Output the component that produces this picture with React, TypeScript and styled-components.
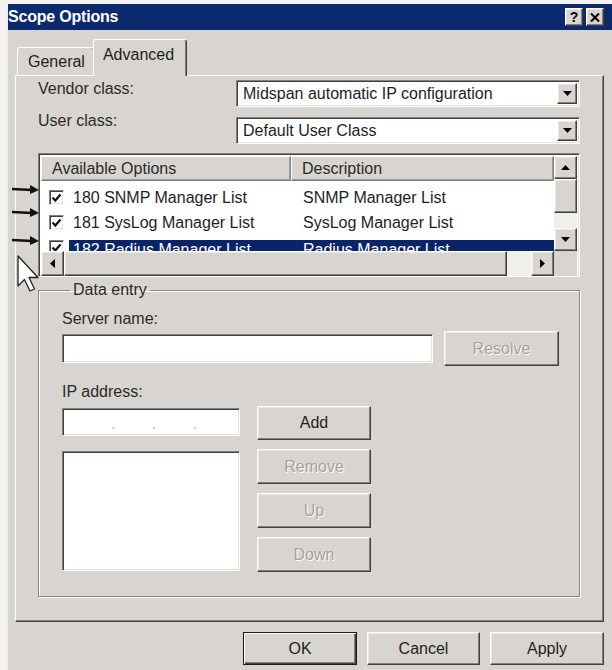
import React from 'react';
import styled, { createGlobalStyle, css } from 'styled-components';

const GlobalStyle = createGlobalStyle`
  html, body {
    margin: 0;
    padding: 0;
    background: #f3f3f1;
  }
  body {
    font-family: "Liberation Sans", Arial, sans-serif;
    font-size: 16px;
    color: #1e1e1e;
  }
`;

// classic 3D edges
const raised = css`
  background: #d8d5d0;
  border: 1px solid;
  border-color: #ffffff #404040 #404040 #ffffff;
  box-shadow: inset -1px -1px 0 #808080, inset 1px 1px 0 #e9e7e3;
`;

const sunken = css`
  background: #ffffff;
  border: 1px solid;
  border-color: #808080 #ffffff #ffffff #808080;
  box-shadow: inset 1px 1px 0 #404040, inset -1px -1px 0 #e4e2de;
`;

const Page = styled.div`
  position: relative;
  width: 612px;
  height: 670px;
  overflow: hidden;
  padding: 4px 0 0 7px;
  box-sizing: border-box;
`;

const Window = styled.div`
  width: 610px;
  height: 680px;
  background: #d8d5d0;
  border-left: 1px solid #ecebe8;
  box-sizing: border-box;
  display: flex;
  flex-direction: column;
`;

const TitleBar = styled.div`
  height: 26px;
  background: #0b2a6e;
  display: flex;
  align-items: center;
  padding: 0 13px 0 0;
  gap: 3px;
`;

const Title = styled.div`
  flex: 1;
  color: #ffffff;
  font-weight: bold;
  font-size: 16px;
  letter-spacing: -0.2px;
`;

const CaptionButton = styled.div`
  ${raised};
  width: 18px;
  height: 18px;
  box-sizing: border-box;
  display: flex;
  align-items: center;
  justify-content: center;
  font-weight: bold;
  font-size: 14px;
  color: #000;
`;

const Body = styled.div`
  padding: 10px 13px 0 7px;
  display: flex;
  flex-direction: column;
`;

const TabStrip = styled.div`
  height: 36px;
  display: flex;
  align-items: flex-end;
  padding-left: 2px;
  position: relative;
  z-index: 1;
  margin-bottom: -1px;
`;

const Tab = styled.div<{ $active?: boolean }>`
  box-sizing: border-box;
  display: flex;
  align-items: center;
  border: 1px solid;
  border-color: #ffffff #404040 transparent #ffffff;
  border-bottom: none;
  border-radius: 3px 3px 0 0;
  background: #d8d5d0;
  box-shadow: inset -1px 0 0 #808080;
  ${(p) =>
    p.$active
      ? css`
          height: 37px;
          padding: 0 12px 6px 9px;
          margin-left: -2px;
        `
      : css`
          height: 28px;
          padding: 0 9px 0 10px;
          margin-bottom: 1px;
        `}
`;

const Panel = styled.div`
  height: 547px;
  box-sizing: border-box;
  border: 1px solid;
  border-color: #ffffff #404040 #404040 #ffffff;
  box-shadow: inset -1px -1px 0 #808080;
  padding: 4px 23px 0 22px;
  display: flex;
  flex-direction: column;
`;

const FieldRow = styled.div<{ $gap?: number }>`
  display: flex;
  align-items: flex-start;
  justify-content: space-between;
  margin-top: ${(p) => p.$gap ?? 0}px;
`;

const Label = styled.span`
  color: #2a2a2a;
  line-height: 18px;
`;

const Combo = styled.div<{ $offset?: number }>`
  ${sunken};
  width: 344px;
  height: 27px;
  margin-top: ${(p) => p.$offset ?? 0}px;
  box-sizing: border-box;
  display: flex;
  align-items: center;
  padding: 0 2px 0 6px;
`;

const ComboText = styled.span`
  flex: 1;
  white-space: nowrap;
  overflow: hidden;
`;

const ArrowButton = styled.div<{ $w?: number; $h?: number }>`
  ${raised};
  width: ${(p) => p.$w ?? 20}px;
  height: ${(p) => p.$h ?? 21}px;
  box-sizing: border-box;
  display: flex;
  align-items: center;
  justify-content: center;
  flex: none;
`;

const List = styled.div`
  ${sunken};
  margin-top: 9px;
  height: 124px;
  box-sizing: border-box;
  padding: 2px;
  display: grid;
  grid-template-columns: 1fr 23px;
  grid-template-rows: 95px 25px;
`;

const ListBody = styled.div`
  overflow: hidden;
  background: #ffffff;
`;

const Header = styled.div`
  display: flex;
  height: 25px;
  margin-bottom: 4px;
`;

const HeaderCell = styled.div<{ $w?: number }>`
  ${raised};
  box-shadow: inset -1px -1px 0 #a09d98;
  border-color: #ffffff #808080 #808080 #ffffff;
  box-sizing: border-box;
  ${(p) => (p.$w ? `width: ${p.$w}px;` : 'flex: 1;')}
  display: flex;
  align-items: center;
  padding-left: 10px;
  color: #2a2a2a;
`;

const Row = styled.div`
  height: 25px;
  display: flex;
  align-items: center;
  padding-left: 8px;
`;

const Check = styled.div`
  ${sunken};
  width: 15px;
  height: 15px;
  box-sizing: border-box;
  display: flex;
  align-items: center;
  justify-content: center;
  flex: none;
`;

const RowLabel = styled.div<{ $selected?: boolean }>`
  flex: 1;
  display: flex;
  align-items: center;
  height: 21px;
  margin-left: 5px;
  padding-left: 4px;
  white-space: nowrap;
  ${(p) =>
    p.$selected &&
    css`
      background: #0a246a;
      color: #ffffff;
      margin-top: 5px;
    `}
`;

const Col = styled.span<{ $w?: number }>`
  ${(p) => (p.$w ? `width: ${p.$w}px;` : '')}
  flex: none;
`;

const VScroll = styled.div`
  display: flex;
  flex-direction: column;
  background: #f1efeb;
`;

const Thumb = styled.div<{ $size: number; $vertical?: boolean }>`
  ${raised};
  box-sizing: border-box;
  flex: none;
  ${(p) => (p.$vertical ? `height: ${p.$size}px;` : `width: ${p.$size}px;`)}
`;

const Track = styled.div`
  flex: 1;
`;

const HScroll = styled.div`
  display: flex;
  background: #f1efeb;
`;

const Corner = styled.div`
  background: #d8d5d0;
`;

const Group = styled.fieldset`
  margin: 4px 0 0;
  height: 316px;
  box-sizing: border-box;
  border: 1px solid #8a8782;
  box-shadow: 1px 1px 0 #ffffff, inset 1px 1px 0 #ffffff;
  padding: 11px 0 0 23px;
  min-width: 0;
`;

const Legend = styled.legend`
  margin-left: 8px;
  padding: 0 3px;
  line-height: 18px;
  color: #2a2a2a;
`;

const GroupLabel = styled.div<{ $gap?: number }>`
  margin-top: ${(p) => p.$gap ?? 0}px;
  line-height: 18px;
  color: #2a2a2a;
`;

const ServerRow = styled.div`
  display: flex;
  align-items: center;
  gap: 11px;
  margin-top: 3px;
`;

const TextBox = styled.div<{ $w: number; $h: number }>`
  ${sunken};
  width: ${(p) => p.$w}px;
  height: ${(p) => p.$h}px;
  box-sizing: border-box;
  flex: none;
`;

const IpBox = styled(TextBox)`
  display: flex;
  align-items: flex-end;
  justify-content: center;
  gap: 37px;
  padding: 0 0 4px 6px;
  color: #b4b2ae;
  font-size: 14px;
  line-height: 14px;
`;

const IpGrid = styled.div`
  display: flex;
  gap: 17px;
  margin-top: 5px;
`;

const IpColumn = styled.div`
  display: flex;
  flex-direction: column;
  gap: 15px;
  padding-top: 2px;
`;

const ButtonColumn = styled.div`
  display: flex;
  flex-direction: column;
  gap: 9px;
`;

const Button = styled.div<{ $w?: number; $h?: number; $disabled?: boolean; $default?: boolean }>`
  ${raised};
  width: ${(p) => p.$w ?? 114}px;
  height: ${(p) => p.$h ?? 35}px;
  box-sizing: border-box;
  display: flex;
  align-items: center;
  justify-content: center;
  flex: none;
  color: ${(p) => (p.$disabled ? '#a5a29d' : '#1e1e1e')};
  ${(p) => p.$disabled && 'text-shadow: 1px 1px 0 #ffffff;'}
  ${(p) =>
    p.$default &&
    css`
      border: 1px solid #1a1a1a;
      box-shadow: inset 1px 1px 0 #ffffff, inset -1px -1px 0 #404040, inset -2px -2px 0 #808080;
    `}
`;

const Footer = styled.div`
  display: flex;
  justify-content: flex-end;
  gap: 10px;
  padding: 10px 0 0;
`;

const Annotation = styled.svg`
  position: absolute;
  left: 10px;
  top: 180px;
`;

const DownTri = () => (
  <svg width="9" height="5" viewBox="0 0 9 5">
    <polygon points="0,0 9,0 4.5,5" fill="#000" />
  </svg>
);
const UpTri = () => (
  <svg width="9" height="5" viewBox="0 0 9 5">
    <polygon points="0,5 9,5 4.5,0" fill="#000" />
  </svg>
);
const LeftTri = () => (
  <svg width="5" height="9" viewBox="0 0 5 9">
    <polygon points="5,0 5,9 0,4.5" fill="#000" />
  </svg>
);
const RightTri = () => (
  <svg width="5" height="9" viewBox="0 0 5 9">
    <polygon points="0,0 0,9 5,4.5" fill="#000" />
  </svg>
);

const Tick = () => (
  <svg width="11" height="10" viewBox="0 0 11 10">
    <polyline points="1.5,4.5 4.3,7.5 9.5,1.5" fill="none" stroke="#111" strokeWidth="2.2" />
  </svg>
);

const options = [
  { code: '180 SNMP Manager List', desc: 'SNMP Manager List' },
  { code: '181 SysLog Manager List', desc: 'SysLog Manager List' },
  { code: '182 Radius Manager List', desc: 'Radius Manager List', selected: true },
];

export default function App() {
  return (
    <Page>
      <GlobalStyle />
      <Window>
        <TitleBar>
          <Title>Scope Options</Title>
          <CaptionButton>?</CaptionButton>
          <CaptionButton>
            <svg width="10" height="9" viewBox="0 0 10 9">
              <path d="M1 0.5 L9 8.5 M9 0.5 L1 8.5" stroke="#000" strokeWidth="2" />
            </svg>
          </CaptionButton>
        </TitleBar>
        <Body>
          <TabStrip>
            <Tab>General</Tab>
            <Tab $active>Advanced</Tab>
          </TabStrip>
          <Panel>
            <FieldRow>
              <Label>Vendor class:</Label>
              <Combo>
                <ComboText>Midspan automatic IP configuration</ComboText>
                <ArrowButton>
                  <DownTri />
                </ArrowButton>
              </Combo>
            </FieldRow>
            <FieldRow $gap={5}>
              <Label>User class:</Label>
              <Combo $offset={5}>
                <ComboText>Default User Class</ComboText>
                <ArrowButton>
                  <DownTri />
                </ArrowButton>
              </Combo>
            </FieldRow>
            <List>
              <ListBody>
                <Header>
                  <HeaderCell $w={250}>Available Options</HeaderCell>
                  <HeaderCell>Description</HeaderCell>
                </Header>
                {options.map((o) => (
                  <Row key={o.code}>
                    <Check>
                      <Tick />
                    </Check>
                    <RowLabel $selected={o.selected}>
                      <Col $w={230}>{o.code}</Col>
                      <Col>{o.desc}</Col>
                    </RowLabel>
                  </Row>
                ))}
              </ListBody>
              <VScroll>
                <ArrowButton $w={23} $h={23}>
                  <UpTri />
                </ArrowButton>
                <Thumb $vertical $size={34} />
                <Track />
                <ArrowButton $w={23} $h={23}>
                  <DownTri />
                </ArrowButton>
              </VScroll>
              <HScroll>
                <ArrowButton $w={23} $h={25}>
                  <LeftTri />
                </ArrowButton>
                <Thumb $size={443} />
                <Track />
                <ArrowButton $w={23} $h={25}>
                  <RightTri />
                </ArrowButton>
              </HScroll>
              <Corner />
            </List>
            <Group>
              <Legend>Data entry</Legend>
              <GroupLabel>Server name:</GroupLabel>
              <ServerRow>
                <TextBox $w={371} $h={29} />
                <Button $w={115} $h={35} $disabled>
                  Resolve
                </Button>
              </ServerRow>
              <GroupLabel $gap={17}>IP address:</GroupLabel>
              <IpGrid>
                <IpColumn>
                  <IpBox $w={178} $h={28}>
                    <span>.</span>
                    <span>.</span>
                    <span>.</span>
                  </IpBox>
                  <TextBox $w={178} $h={120} />
                </IpColumn>
                <ButtonColumn>
                  <Button $h={34}>Add</Button>
                  <Button $disabled>Remove</Button>
                  <Button $disabled>Up</Button>
                  <Button $disabled>Down</Button>
                </ButtonColumn>
              </IpGrid>
            </Group>
          </Panel>
          <Footer>
            <Button $default $h={33}>
              OK
            </Button>
            <Button $w={113} $h={33}>
              Cancel
            </Button>
            <Button $h={33}>Apply</Button>
          </Footer>
        </Body>
      </Window>

      {/* hand-drawn pointers and mouse cursor over the dialog */}
      <Annotation width="40" height="115" viewBox="0 0 40 115">
        {[9, 32, 60].map((y) => (
          <g key={y}>
            <path d={`M2 ${y} L22 ${y + 1}`} stroke="#111" strokeWidth="2.5" />
            <polygon points={`20,${y - 4} 29,${y + 1} 20,${y + 5}`} fill="#111" />
          </g>
        ))}
        <path
          d="M8 76 L8 106 L14.5 99.5 L20 111 L24.5 109 L19 97.5 L28 97.5 Z"
          fill="#ffffff"
          stroke="#222"
          strokeWidth="1.3"
          strokeLinejoin="round"
        />
      </Annotation>
    </Page>
  );
}
